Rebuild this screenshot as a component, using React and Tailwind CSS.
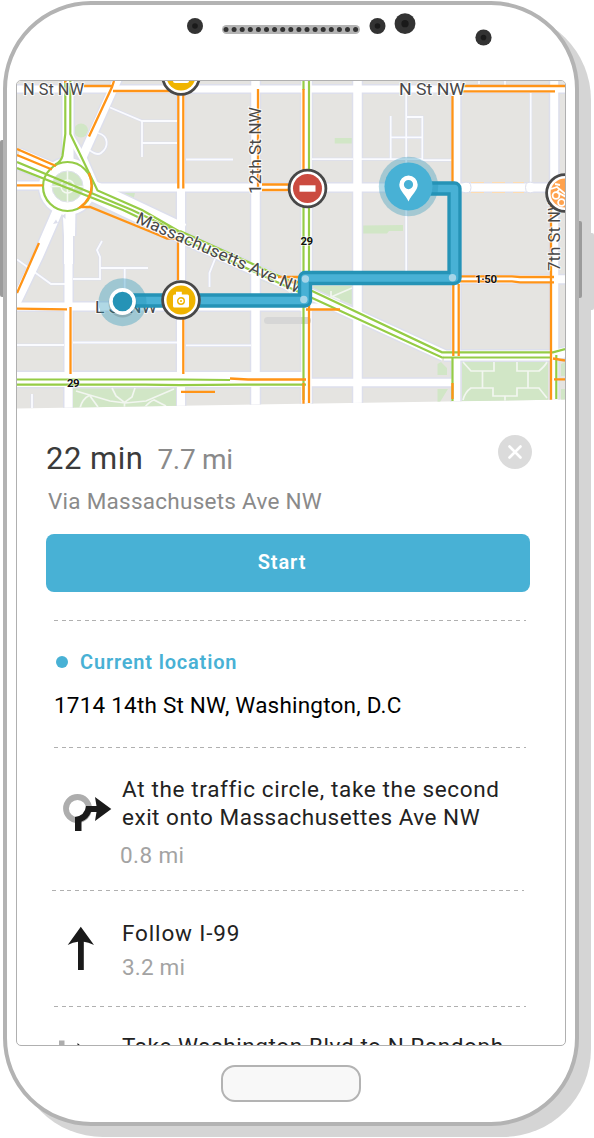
import React from "react";

const ORANGE = "#ff9417";
const GREEN = "#95cc46";

const roads = [
  { d: "M17 89H565", w: 7 },
  { d: "M95 187.5H565", w: 8 },
  { d: "M17 185.5H50", w: 8 },
  { d: "M17 306.5H312", w: 8 },
  { d: "M300 307H330", w: 7 },
  { d: "M17 379.5H310", w: 15 },
  { d: "M308 382.5H456", w: 7.5 },
  { d: "M455 279.3H565", w: 8 },
  { d: "M444 355.5H552L566 352", w: 10 },
  { d: "M68 81V165", w: 11 },
  { d: "M181 81V408", w: 8 },
  { d: "M255.5 81V408", w: 8.5 },
  { d: "M306.5 81V408", w: 10.5 },
  { d: "M357.5 81V408", w: 8.5 },
  { d: "M456 81V404", w: 8.5 },
  { d: "M554.2 81V404", w: 8 },
  { d: "M118 78L82 158", w: 8.5 },
  { d: "M70 136L84 160L97 190", w: 7 },
  { d: "M58 210L38 256L14 306", w: 10 },
  { d: "M68.5 262V408", w: 8 },
  { d: "M67 208L68.5 236V264", w: 9 },
  { d: "M70 208L69.5 236", w: 11 },
  { d: "M17 158L76 183L182 233", w: 20 },
  { d: "M178 236L310 294L444 355.5", w: 11 },
];

const alleys = [
  "M406.2 92V271",
  "M390.7 116V160",
  "M406.2 117H422.3V160",
  "M390.7 137.3H422.3",
  "M312 159.2H353",
  "M361 159.2H422V160.2H452",
  "M530.7 93V183",
  "M110 107.5L142 121H177",
  "M142 121V157",
  "M142 143H177",
  "M186 159.5H233",
  "M98 133C109 136 109 147 101 153C97 156 92 152 88 149",
  "M102 241L97 250L100 257V279H73",
  "M100 268H148",
  "M124.7 268V300",
  "M17 259.5L51 284H65",
  "M215 259L209.5 273V287",
  "M73 342.5H177",
  "M17 345H64",
  "M186 345.3H251",
  "M32 394V408",
  "M479 81V84",
  "M505 81V92",
];

function Road({ d, w }) {
  return <path d={d} fill="none" stroke="#fff" strokeWidth={w} />;
}

function MapLabel({ x, y, length, rotate = 0, size = 16.8, children }) {
  return (
    <text
      x={x}
      y={y}
      fontSize={size}
      textLength={length}
      lengthAdjust="spacingAndGlyphs"
      transform={`rotate(${rotate} ${x} ${y})`}
      fill="#484848"
      stroke="#fff"
      strokeOpacity=".75"
      strokeWidth="2.2"
      strokeLinejoin="round"
      paintOrder="stroke"
    >
      {children}
    </text>
  );
}

function RouteNumber({ x, y, length, children }) {
  return (
    <text x={x} y={y} fontSize="11.5" fontWeight="700" textLength={length} fill="#111" stroke="#fff" strokeWidth="1.5" strokeOpacity=".6" paintOrder="stroke">
      {children}
    </text>
  );
}

function Marker({ x, y, color, children }) {
  return (
    <g transform={`translate(${x} ${y})`}>
      <circle r="18.4" fill="#fff" stroke="#484848" strokeWidth="2.8" />
      <circle r="14.5" fill={color} />
      {children}
    </g>
  );
}

function Camera() {
  return (
    <g>
      <path d="M-8 -4Q-8 -5.500 -6.500 -5.500H-5V-8.200H0.8V-5.500H6.500Q8 -5.500 8 -4V6Q8 7.500 6.500 7.500H-6.500Q-8 7.500 -8 6Z" fill="#fff" />
      <circle cy="1" r="3.300" fill="none" stroke="#f0b400" strokeWidth="1.400" />
      <circle cy="1" r="1" fill="#f0b400" />
    </g>
  );
}

function StreetMap() {
  return (
    <svg className="block shrink-0" width="548" height="328" viewBox="17 81 548 328" fontFamily="Roboto, sans-serif">
      <defs>
        <clipPath id="mapEdge">
          <path d="M17 81H565V399.500L17 408.500Z" />
        </clipPath>
      </defs>
      <g clipPath="url(#mapEdge)">
        <rect x="17" y="81" width="548" height="328" fill="#e5e4e1" />
        <g fill="#d1e6c6">
          <circle cx="81" cy="130.500" r="7" />
          <path d="M110 193H135L132 205Z" />
          <path d="M334.700 138H352V143.500H334.700Z" />
          <path d="M363 225.500L403 225V231H389L387 233.500H363Z" />
          <path d="M312 286H353V305L312 288Z" />
          <path d="M260 280L290 280V292Z" />
        </g>
        <g fill="none" stroke="#dddfec" strokeLinecap="butt">
          {roads.map((r) => <path key={r.d} d={r.d} strokeWidth={r.w + 3} />)}
          <circle cx="67.500" cy="186.500" r="24.500" strokeWidth="11" />
          {alleys.map((d) => <path key={d} d={d} strokeWidth="3.200" />)}
        </g>
        {alleys.map((d) => <path key={d} d={d} fill="none" stroke="#fafbff" strokeWidth="1.800" />)}
        <g>
          {roads.map((r) => <Road key={r.d} {...r} />)}
        </g>
        <circle cx="67.500" cy="186.500" r="28.500" fill="#fff" />
        <circle cx="67.500" cy="186.500" r="15.500" fill="#d1e6c6" stroke="#dddfec" />
        <path d="M67.500 170V203M50 186.500H84" stroke="#f4f8f2" strokeWidth="1.500" />
        <circle cx="67.500" cy="186.500" r="6.500" fill="none" stroke="#f4f8f2" strokeWidth="1.500" />
        <path d="M53 224L56 219.500L58 223ZM62 216L65.500 213.500L65.500 219Z" fill="#dddfec" />
        <g stroke="#dddfec" strokeWidth="1" fill="#fff">
          <path d="M462 183Q471 180 471 187.500Q471 195 462 192" />
          <path d="M534 183Q525.500 180 525.500 187.500Q525.500 195 534 192" />
        </g>
        <path d="M471 182.500H524M471 192.500H524" stroke="#ffdcb0" strokeWidth="1.200" strokeDasharray="13 8" />

        <g fill="#d1e6c6">
          <path d="M73 388.500H176V408H73Z" />
          <path d="M462 362H548V401H462Z" />
          <path d="M441 362L447 368V375H437.500V364ZM437.500 389H448L440 402H437.500ZM561 364L565 362V376H561ZM561 389H565V400H561Z" />
        </g>
        <g fill="none" stroke="#f2f6f0" strokeWidth="1.700">
          <path d="M76 391L110 401L125 403L146 401L174 389M112 388L116 396L124.500 402.500L132 397L135 388M124.500 402V408M80 408Q82 399 90 395M98 407L90 396M144 408Q150 401 154 400L166 406" />
          <path d="M463 362L471 371H482.500V388H471Q465 392 463 400M494 362V371H482.500M482.500 388H493V396H517V388H528V371H517V362M528 371H539Q545 366 547 362M528 388H539L547 398M505 396V401" />
          <path d="M331 291V297L352 288M331 296L340 300M276 281L290 292L300 285" />
        </g>

        <rect x="264" y="317" width="47" height="7" rx="3.500" fill="#d6d6d6" />

        <g fill="none" stroke={GREEN} strokeWidth="2.200">
          <path d="M65.300 81V134L62.500 156Q61 162 55 164.500" />
          <path d="M70.300 81V134L97.500 190.500L142 210L182 233" />
          <path d="M17 162L132 210L180 233" />
          <path d="M17 168L123 210L142 219" />
          <path d="M180 231L310 290L442 352.300H553L565 349" />
          <path d="M180 238L310 297L442 357.500H551" />
          <circle cx="67.500" cy="186.500" r="24.500" />
          <path d="M303.500 81V90M309 81V175M303.500 207V400M309 207V300" />
          <path d="M17 379.500H183L230 380M17 384.700H145L180 385.200L240 384.700H306" />
          <path d="M452.500 357V401M556.300 355V399" />
        </g>
        <g fill="none" stroke={ORANGE} strokeWidth="2.300">
          <path d="M17 149L56 166M17 155L52 169.500M17 185.300H43" />
          <path d="M65.300 81V83M84 86H113M114 81L112 87L89 136.500M113 91H178" />
          <path d="M178.300 92V188.500M183.300 92V188.500" />
          <path d="M89 173Q97 194 80.500 207H90L155 233.500L167 238.500H178V280" />
          <path d="M39 243L17 293M17 308.700L67 309.300M70.500 307V374M183.300 318V374M181 391.800H215" />
          <path d="M258 89V187M262 184.500H292M262 190H292" />
          <path d="M303.500 89V172M309 300V403M303.500 383V404M306 309.500H340" />
          <path d="M278 277H302M285 282H302M230 378.500L248 379.500H306" />
          <path d="M462 86H565M462 91.300H555M452.500 96V184" />
          <path d="M460 276.300H512L520 277H554M460 281.300H512L520 282.300H554" />
          <path d="M453.300 284V356M458.700 284V356M452.500 383V399" />
          <path d="M551 200V400M553 358.500L565 360.500M554 379.300H565" />
        </g>

        <MapLabel x={23} y={94.500} length={61}>N St NW</MapLabel>
        <MapLabel x={399} y={95} length={66}>N St NW</MapLabel>
        <MapLabel x={261.300} y={194} length={87} rotate={-90}>12th St NW</MapLabel>
        <MapLabel x={560} y={271} length={75} rotate={-90}>7th St NW</MapLabel>
        <MapLabel x={135} y={222.500} length={184} rotate={23.600}>Massachusetts Ave NW</MapLabel>
        <MapLabel x={95} y={312.500} length={62}>L St NW</MapLabel>
        <RouteNumber x={67} y={386.500} length={12.500}>29</RouteNumber>
        <RouteNumber x={300.500} y={245} length={12.500}>29</RouteNumber>
        <RouteNumber x={475} y={283.300} length={22}>1·50</RouteNumber>

        <g fill="none" strokeLinejoin="round">
          <path d="M123 300.500H305V278H454.500V188.500H420" stroke="#2593b6" strokeWidth="14.300" />
          <path d="M123 300.500H305V278H454.500V188.500H420" stroke="#48b1d5" strokeWidth="7.600" />
        </g>
        <g fill="#a6d5e8">
          <circle cx="305.400" cy="279" r="3.700" />
          <circle cx="303.800" cy="299.500" r="3.700" />
          <circle cx="452.500" cy="277.700" r="3.700" />
        </g>

        <circle cx="122.500" cy="302.200" r="24" fill="#2593b6" fillOpacity=".36" />
        <circle cx="122.500" cy="303.500" r="14" fill="#000" fillOpacity=".13" />
        <circle cx="122.500" cy="301.500" r="11.600" fill="#2593b6" stroke="#fff" strokeWidth="3.600" />

        <circle cx="408.500" cy="186.500" r="29.700" fill="#2593b6" fillOpacity=".34" />
        <circle cx="408.500" cy="186.500" r="24" fill="#48b1d5" />
        <path fillRule="evenodd" d="M408.500 201.500C405 194 399.300 190.500 399.300 184.800A9.200 9.200 0 0 1 417.700 184.800C417.700 190.500 412 194 408.500 201.500ZM408.500 180A4.600 4.600 0 1 0 408.500 189.200A4.600 4.600 0 1 0 408.500 180Z" fill="#fff" />

        <Marker x={181} y={300} color="#f0b400"><Camera /></Marker>
        <Marker x={181} y={76} color="#f0b400">
          <path d="M-8 0H8V5Q8 7 6 7H-6Q-8 7 -8 5Z" fill="#fff" />
        </Marker>
        <Marker x={307.500} y={188.500} color="#cb4b40">
          <rect x="-8" y="-3.200" width="16" height="6.400" fill="#fff" />
        </Marker>
        <Marker x={565} y={193} color="#ffa24d">
          <g fill="none" stroke="#fff" strokeWidth="1.800">
            <path d="M-14 -4L-8 -6L3 3M-10 -9L-5 -8M-6 -3L-8 -1L3 5" />
            <circle cx="-9" cy="2.500" r="3.400" />
            <circle cx="-3.500" cy="9.500" r="3.400" />
          </g>
        </Marker>
      </g>
    </svg>
  );
}

function Hardware() {
  const cameras = [[195, 26, 8], [377.500, 26, 8], [405, 23.700, 10.400], [483.500, 37.500, 8.100]];
  return (
    <svg className="block shrink-0" width="568" height="75" viewBox="7 5 568 75">
      <rect x="222" y="25" width="138" height="9" rx="4.500" fill="#b3b3b3" />
      {Array.from({ length: 17 }, (_, i) => (
        <circle key={i} cx={226 + i * 8.100} cy="29.500" r="2.500" fill="#333" />
      ))}
      {cameras.map(([x, y, r]) => (
        <g key={x}>
          <circle cx={x} cy={y} r={r} fill="#333" />
          <circle cx={x} cy={y} r={r * 0.35} fill="#1a1a1a" />
        </g>
      ))}
    </svg>
  );
}

function Divider({ className = "" }) {
  return (
    <div className={`h-px w-[472px] shrink-0 bg-[repeating-linear-gradient(90deg,#b0b0b0_0_4px,transparent_4px_7.7px)] ${className}`} />
  );
}

function RoundaboutIcon() {
  return (
    <svg className="mt-[18px] block" width="56" height="42" viewBox="58 793 56 42">
      <circle cx="77.500" cy="808.500" r="11.500" fill="none" stroke="#adadad" strokeWidth="5.800" />
      <path d="M75 831V817Q85 815.500 86 806H96.500L95 797L111.300 809L95 821L96.500 812H91Q88 819.500 81.500 821.500V831Z" fill="#1a1a1a" />
    </svg>
  );
}

function StraightIcon() {
  return (
    <svg className="mt-[7px] block" width="56" height="48" viewBox="58 926 56 48">
      <path d="M80.800 926.700L94 945Q88 942 83.800 941.700V970H78V941.700Q73 942 67.700 945Z" fill="#1a1a1a" />
    </svg>
  );
}

function NextIcon() {
  return (
    <svg className="mt-[7px] block" width="56" height="30" viewBox="58 1039 56 30">
      <path d="M59 1040.500H64.500V1060H59Z" fill="#adadad" />
      <path d="M77.500 1043L92 1056H77.500Z" fill="#1a1a1a" />
    </svg>
  );
}

function DirectionsPanel() {
  return (
    <section className="flex flex-col pt-[30px]">
      <header className="ml-[29px] flex h-10 w-[486px] justify-between">
        <div className="flex items-baseline gap-[14px]">
          <h1 className="text-[31px] leading-10 tracking-[0.5px] text-[#3b3b3b]">22 min</h1>
          <span className="text-[28px] leading-10 tracking-[-0.3px] text-[#8a8a8a]">7.7 mi</span>
        </div>
        <button className="-mt-[4px] flex size-[34px] items-center justify-center rounded-full bg-[#dbdbdb]" aria-label="Close">
          <svg width="14" height="14" viewBox="0 0 14 14">
            <path d="M1.500 1.500L12.500 12.500M12.500 1.500L1.500 12.500" stroke="#fff" strokeWidth="2.600" strokeLinecap="round" />
          </svg>
        </button>
      </header>
      <p className="mt-[8px] ml-[31px] text-[22.500px] leading-7 tracking-[0.260px] whitespace-nowrap text-[#8a8a8a]">Via Massachusets Ave NW</p>
      <button className="mt-[19px] ml-[29px] h-[58px] w-[484px] rounded-lg bg-[#48b1d5] pr-[12px] pb-[2px] text-[20px] font-semibold tracking-[0.9px] text-white">Start</button>
      <Divider className="mt-7 ml-[37px]" />
      <div className="mt-[29px] ml-[39px] flex h-6 items-center gap-[12px] text-[#48b1d5]">
        <span className="size-3 rounded-full bg-[#48b1d5]" />
        <h2 className="text-[20px] leading-6 font-semibold tracking-[0.820px]">Current location</h2>
      </div>
      <p className="mt-[17px] ml-[37px] text-[22.500px] leading-7 tracking-[0.210px] whitespace-nowrap text-black">1714 14th St NW, Washington, D.C</p>
      <Divider className="mt-7 ml-[37px]" />
      <div className="mt-[27px] ml-[41px] flex h-[94px] gap-[8px]">
        <RoundaboutIcon />
        <div>
          <p className="text-[22.500px] leading-7 whitespace-nowrap text-[#222]">
            <span className="tracking-[0.660px]">At the traffic circle, take the second</span>
            <br />
            <span className="tracking-[0.520px]">exit onto Massachusettes Ave NW</span>
          </p>
          <p className="mt-[10px] -ml-[2px] text-[22.500px] leading-7 tracking-[0.4px] text-[#a3a3a3]">0.8 mi</p>
        </div>
      </div>
      <Divider className="mt-[21px] ml-[35px]" />
      <div className="mt-7 ml-[41px] flex h-[62px] gap-[8px]">
        <StraightIcon />
        <div>
          <p className="text-[22.500px] leading-7 tracking-[0.850px] text-[#222]">Follow I-99</p>
          <p className="mt-[6px] text-[22.500px] leading-7 tracking-[0.2px] text-[#a3a3a3]">3.2 mi</p>
        </div>
      </div>
      <Divider className="mt-[25px] ml-[37px]" />
      <div className="mt-[25px] ml-[41px] flex gap-[8px]">
        <NextIcon />
        <p className="text-[22.500px] leading-7 tracking-[0.590px] whitespace-nowrap text-[#222]">Take Washington Blvd to N Randoph</p>
      </div>
    </section>
  );
}

export default function App() {
  return (
    <div className="relative h-[1138px] w-[594px] overflow-hidden bg-white pt-px pl-[3px] font-['Roboto',sans-serif]">
      <span className="absolute top-[140px] left-0 h-[157px] w-[4px] rounded-l-[2px] bg-[#9b9b9b]" />
      <span className="absolute top-[233px] left-[589px] h-[77px] w-[5px] rounded-[2px] bg-[#d5d5d5]" />
      <div className="relative flex h-[1125px] w-[576px] flex-col rounded-[88px] border-4 border-[#b3b3b3] bg-white shadow-[12px_11px_0_0_#d5d5d5]">
        <Hardware />
        <main className="ml-[9px] flex h-[966px] w-[550px] shrink-0 flex-col overflow-hidden rounded-[5px] border border-[#b0b0b0] bg-white">
          <StreetMap />
          <DirectionsPanel />
        </main>
        <div className="mt-[19px] ml-[214px] h-[37px] w-[140px] rounded-[14px] border-2 border-[#b3b3b3] bg-[#f8f8f8]" />
      </div>
      <span className="absolute top-[221px] left-[579px] h-[77px] w-[3px] rounded-r-[2px] bg-[#9b9b9b]" />
    </div>
  );
}
